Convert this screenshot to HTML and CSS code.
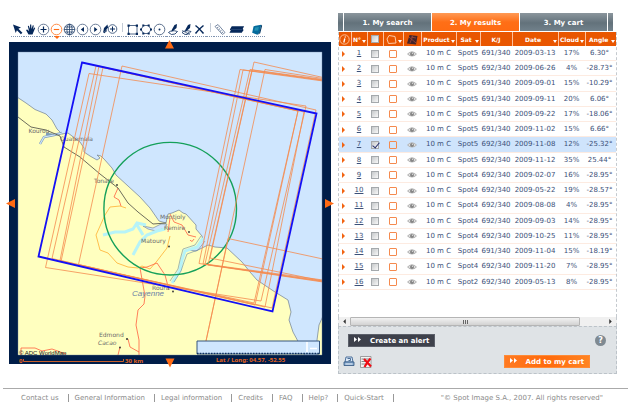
FILE: index.html
```
<!DOCTYPE html>
<html lang="en">
<head>
<meta charset="utf-8">
<title>Spot Image catalogue</title>
<link rel="stylesheet" href="styles.css">
</head>
<body>
<svg class="defs" aria-hidden="true">
  <symbol id="eye" viewBox="0 0 10 6"><path d="M0 3Q5-2.400 10 3Q5 8 0 3Z" fill="#b0b0b0"/><path d="M1.200 3Q5-.8 8.800 3Q5 6.400 1.200 3" fill="#e4e4e4"/><circle cx="5" cy="3" r="2" fill="#858585"/><circle cx="5.500" cy="2.300" r=".7" fill="#ddd"/></symbol>
  <symbol id="pen" viewBox="0 0 13 13"><path d="M10.500 1L8 2 5.500 6.500 5 9l2-1.500L10 5Z" fill="#06285a"/><path d="M2 9.500Q5 6.500 11 8.500Q9 12 5 11.500Z" fill="none" stroke="#06285a" stroke-width=".8"/></symbol>
</svg>
<main class="layout">
  <section class="viewer">
    <div class="toolbar" role="toolbar">
      <button class="tool" aria-label="Select"><svg viewBox="0 0 13 13"><path d="M2 1.500l8 3-2.600 1.300 4 4-1.500 1.500-4-4L4.700 10Z" fill="#06285a"/></svg></button>
      <button class="tool" aria-label="Pan"><svg viewBox="0 0 13 13"><path d="M4.500 11.500L2 7l1.200-.6L5 8 3.800 3l1-.3L6 6l.1-4.500h1.100L7.500 6 8.800 2.300l1 .3L9 6.500l1.300-2 .9.500-1.700 4-1 2.500Z" fill="#06285a"/></svg></button>
      <button class="tool" aria-label="Zoom in"><svg viewBox="0 0 13 13"><circle cx="6.500" cy="6.500" r="5.300" fill="none" stroke="#4a6080" stroke-width=".8"/><path d="M3.500 6.500h6M6.500 3.500v6" stroke="#06285a" stroke-width="1.200"/></svg></button>
      <button class="tool tool-active" aria-label="Zoom out"><svg viewBox="0 0 13 13"><circle cx="6.500" cy="6.500" r="5.300" fill="none" stroke="#ff7f32" stroke-width=".9"/><path d="M3.800 6.500h5.400" stroke="#ff6a13" stroke-width="1.100"/></svg></button>
      <button class="tool" aria-label="World"><svg viewBox="0 0 13 13"><g fill="none" stroke="#25426c" stroke-width=".8"><circle cx="6.500" cy="6.500" r="5.300"/><ellipse cx="6.500" cy="6.500" rx="2.600" ry="5.300"/><path d="M6.500 1v11M1 6.500h11M2 4h9M2 9h9"/></g></svg></button>
      <button class="tool" aria-label="Previous view"><svg viewBox="0 0 13 13"><circle cx="6.500" cy="6.500" r="5.300" fill="none" stroke="#4a6080" stroke-width=".8"/><path d="M8 4v5L4.800 6.500Z" fill="#06285a"/></svg></button>
      <button class="tool" aria-label="Next view"><svg viewBox="0 0 13 13"><circle cx="6.500" cy="6.500" r="5.300" fill="none" stroke="#4a6080" stroke-width=".8"/><path d="M5.200 4v5l3.200-2.500Z" fill="#06285a"/></svg></button>
      <button class="tool tool-wide" aria-label="Draw zoom"><svg viewBox="0 0 16 13"><path d="M1 10l1-5 3.500-3.500L6 4.500 3.500 8Z" fill="#06285a"/><circle cx="10.500" cy="6" r="4.300" fill="none" stroke="#25426c" stroke-width=".8"/><path d="M8 6h5M10.500 3.500v5M5 7.500L2 10" stroke="#06285a"/></svg></button>
      <span class="divider"></span>
      <button class="tool" aria-label="Rectangle"><svg viewBox="0 0 13 13"><path d="M2.500 2.500h8.500v8.500H2.500Z" fill="none" stroke="#25426c" stroke-width=".8"/><path d="M1.500 1.500h2.200v2.200H1.500ZM9.800 1.500H12v2.200H9.800ZM1.500 9.800h2.200V12H1.500ZM9.800 9.800H12V12H9.800Z" fill="#06285a"/></svg></button>
      <button class="tool tool-mid" aria-label="Polygon"><svg viewBox="0 0 14 13"><path d="M4.500 2.500h5l2.500 4-2.500 4h-5L2 6.500Z" fill="none" stroke="#25426c" stroke-width=".8"/><path d="M3.300 1.500h2v2h-2ZM8.700 1.500h2v2h-2ZM3.300 9.500h2v2h-2ZM8.700 9.500h2v2h-2ZM1 5.500h2v2H1ZM11 5.500h2v2h-2Z" fill="#06285a"/></svg></button>
      <button class="tool" aria-label="Circle"><svg viewBox="0 0 13 13"><circle cx="6.500" cy="6.500" r="5.300" fill="none" stroke="#4a6080" stroke-width=".9"/><circle cx="6.500" cy="6.500" r="1" fill="#06285a"/></svg></button>
      <button class="tool tool-mid" aria-label="Draw point"><svg viewBox="0 0 13 13"><use href="#pen"/></svg></button>
      <button class="tool" aria-label="Edit shape"><svg viewBox="0 0 13 13"><use href="#pen"/><path d="M2 7.500l8 4M6 12l3-3" stroke="#25426c" stroke-width=".7"/></svg></button>
      <button class="tool" aria-label="Delete"><svg viewBox="0 0 13 13"><path d="M2.500 2.500Q6 5 10.500 10.500M10.500 2.500Q6 6 2.500 10.500" fill="none" stroke="#06285a" stroke-width="1.500"/></svg></button>
      <span class="divider"></span>
      <button class="tool" aria-label="Measure"><svg viewBox="0 0 13 13"><path d="M1 3.500l3-2 7 8-2.500 2Z" fill="#fff" stroke="#6c7f9c" stroke-width=".9"/><path d="M3 5l1.500-1M4.500 6.700l1.500-1M6 8.400L7.500 7.300M7.500 10l1.500-1" stroke="#25426c" stroke-width=".7"/></svg></button>
      <button class="tool tool-layer" aria-label="Layers"><svg viewBox="0 0 20 13"><path d="M5 3h13l-1.500 3 1 1-2 3H2.500l1.500-2.500L3 6.500Z" fill="#06285a"/><path d="M4 6.500h12" stroke="#40608c" stroke-width=".5"/></svg></button>
      <button class="tool tool-layer" aria-label="Imagery"><svg viewBox="0 0 20 13"><path d="M8 3l8-1.500-1.500 8L12 12l-5.500-2Z" fill="#046a9b"/><path d="M16 1.500l1 1-2 8-2.800 1.500 2-2.500Z" fill="#083a65"/><path d="M9.500 4.500l4-.7-.7 3.800-4 .3Z" fill="#2290b4"/></svg></button>
    </div>
    <svg class="map" viewBox="9 42 322 322" role="img" aria-label="Coverage map">
      <clipPath id="frame"><path d="M18 52h304v303H18Z"/></clipPath>
      <path d="M9 42h322v322H9Z" fill="#001d48"/>
      <g clip-path="url(#frame)">
        <path d="M18 52h304v303H18Z" fill="#cfe6fe"/>
        <g fill="#ffffbf" stroke="#7c8c9c" stroke-width=".8">
          <path d="M17 97L26 103 35 109.500 46 114 52 120 57 129 62 134 68 133 72 136 80 142 84 148 84 152 90 156 97 160 100 158 97 155 101 156 104 159 112 168 116 175 128 186 140 197 150 208 159 221 166 223 168 214 172 213 179 210 183 213 186 214 196 225 196 229 202 236 203 240 197 247 187 250 196 251 208 245 215 247 227 248 242 262 250 272 257 280 275 292 288 300 291 312 289 320 293 332 300 345 305 356H17Z"/>
          <path d="M323 316L319 325 317 340 317 356H323Z"/>
        </g>
        <path d="M40 144l4-7 10-2 8-2M54 135l-8-1" fill="none" stroke="#7c9cb8" stroke-width="2.400"/>
        <path d="M40 144l4-7 10-2 8-2" fill="none" stroke="#cfe6fe" stroke-width="1.200"/>
        <path d="M143 226l10 2 8-4 6 0-2 4-9 3-8-2Z" fill="#cfe6fe" stroke="#7c8c9c" stroke-width=".7"/>
        <g fill="none" stroke="#b6f3f8" stroke-width="3">
          <path d="M103 235l12-3 10 0 8-3 4-6 9 2M133 255l7-13 7-7 10-4 8-2M137 225l6 10"/>
          <path d="M203 238l-6 9-12 4-3 9-2 10-8 13"/>
        </g>
        <path d="M205 241l-7 9-11 4-3 8-3 9-7 11M201 236l-6 9-12 4-3 11-2 9-8 12" fill="none" stroke="#6789a3" stroke-width=".6"/>
        <path d="M126 208l-6-2-10 1-5 8-9 20 4 15 8 3 9 10 11 4 10 1 4-2 8 3 7-8 10-13 3-12" fill="none" stroke="#ffc04d"/>
        <g fill="none" stroke="#ff6040" stroke-width=".8">
          <path d="M118 188l-4 9 5 3 2 6M140 268l3 17 2 11-1 8-6 6-2 15 3 15v15M128 339l2 8 9 5M120 347l-2 8M21 355v-7h14l7 3 10-2 14 5M157 263l8 12 4 15M157 263l-10 4-7 1M170 214l4 8 8 3 6 10 8 2"/>
          <path d="M170 218l-2 14M190 240q2 3 4-1"/>
        </g>
        <path d="M18 117l13 10 15 3 14 6 4 11 16 10 20 17 18 14 10 15 10 9 15 12 13-1" fill="none" stroke="#5c5c50" stroke-width=".9"/>
        <g fill="#333"><circle cx="117" cy="185" r=".9"/><circle cx="189" cy="232" r=".9"/><circle cx="169" cy="246.500" r=".9"/><circle cx="173" cy="291.500" r=".9"/><circle cx="127" cy="339" r="1"/><circle cx="120" cy="347.500" r=".9"/></g>
        <g class="place">
          <text x="28.500" y="132.500">Kourou</text><text x="60" y="141">Guatemala</text><text x="94" y="183">Tonate</text><text x="160" y="219">Montjoly</text><text x="164" y="230">Remire</text><text x="141" y="243">Matoury</text><text x="152" y="289.500">Roura</text><text x="99" y="337">Edmond</text><text class="slanted" x="98" y="345">Cacao</text>
        </g>
        <text class="city" x="132" y="296">Cayenne</text>
        <text class="credit" x="19" y="355">© ADC WorldMap</text>
        <circle cx="170.200" cy="208.700" r="66.300" fill="none" stroke="#15a05a" stroke-width="1.400"/>
        <g fill="none" stroke="#f58a4e" stroke-width=".8">
          <path d="M89 73.500L306 106 261 301 45.500 267.500Z"/>
          <path d="M96 66L298 111 255 305 52 258.500Z"/>
          <path d="M99 66L304 112 265 307 60 260.500Z"/>
          <path d="M103 67.500L298 111 254 303 61 261.500Z"/>
          <path d="M122 66L316 110 272 308 78.500 264.500Z"/>
          <path d="M323 80L240 69.500 199 263.500 323 281"/>
          <path d="M323 81L243 70 203 264 323 281.500"/>
          <path d="M323 79.500L250 69.500 205 264 323 280"/>
          <path d="M323 80.500L252 70 208 265 323 282"/>
          <path d="M323 77.500L254 62 210 258 323 281"/>
          <path d="M323 78.500L265 69.500 206 341"/>
          <path d="M323 259L228 238.500 206 341"/>
        </g>
        <path d="M82 62.500L316.500 113.500 272.500 311.500 38.500 256.500Z" fill="none" stroke="#1410f5" stroke-width="1.800"/>
        <path d="M197 341h122.500v13H197Z" fill="#cfe6fe" stroke="#36557c"/>
        <path d="M197 353.500h122" stroke="#0c2f5e" stroke-width="1.600" stroke-dasharray="1.500 1.300"/>
        <path d="M307 342v10M310 348.500h7" stroke="#fff" stroke-width="1.600"/>
      </g>
      <path d="M18 52h304v303H18Z" fill="none" stroke="#6f87a5" stroke-width=".4"/>
      <path d="M23.500 359v2.500H123.500V359" fill="none" stroke="#c9602b"/>
      <g class="readout"><text x="19" y="362.500">0</text><text x="125" y="362.500">30 km</text><text x="216" y="362">Lat / Long: 04.57, -52.55</text></g>
      <path d="M169.500 40l4.500 8.500h-9ZM170 367.500l4.500-9h-9ZM6 203.500l9-4.500v9ZM334 203.500l-9-4.500v9Z" fill="#ff6a13"/>
    </svg>
  </section>

  <section class="panel">
    <nav class="tabs">
      <span class="tab-end"></span>
      <a class="tab" href="#search">1. My search</a>
      <a class="tab tab-on" href="#results">2. My results</a>
      <a class="tab" href="#cart">3. My cart</a>
      <span class="tab-end"></span>
    </nav>
    <div class="results">
      <table class="scenes">
        <colgroup><col class="c-go"><col class="c-no"><col class="c-no"><col class="c-shape"><col class="c-eye"><col class="c-product"><col class="c-sat"><col class="c-kj"><col class="c-date"><col class="c-cloud"><col class="c-angle"></colgroup>
        <thead><tr>
          <th><svg class="head-icon" viewBox="0 0 11 11"><circle cx="5.500" cy="5.500" r="4.700" fill="none" stroke="#ffc9a5" stroke-width=".9"/><path d="M6.300 2.500v1M5.800 4.500L4.800 8.500" stroke="#fff" stroke-width="1.300"/></svg></th>
          <th class="sort">N°</th>
          <th><input type="checkbox" aria-label="Select all"></th>
          <th class="sort"><svg class="head-icon" viewBox="0 0 11 11"><path d="M3 1.500l6 1 1 6.500-7.500.5L1 5Z" fill="none" stroke="#ffc9a5"/></svg></th>
          <th><svg class="head-icon" viewBox="0 0 11 11"><path d="M2.500 1L10.500 2 9 10.500 0 9.500Z" fill="#43242b"/><path d="M2 3l7 6M6 1.500L3 9M4 3l5 1" stroke="#a04a3c" stroke-width=".8"/></svg></th>
          <th class="sort">Product</th><th class="sort">Sat</th><th>K/J</th><th class="sort">Date</th><th class="sort">Cloud</th><th class="sort">Angle</th>
        </tr></thead>
        <tbody id="rows"></tbody>
      </table>
    </div>
    <div class="scroller">
      <button class="scroll-step" aria-label="Scroll left"><svg viewBox="0 0 4 4"><path d="M3 0v4L1 2Z" fill="#333"/></svg></button>
      <div class="scroll-thumb"><i></i><i></i><i></i></div>
      <button class="scroll-step scroll-right" aria-label="Scroll right"><svg viewBox="0 0 4 4"><path d="M1 0v4l2-2Z" fill="#333"/></svg></button>
    </div>
    <div class="actions">
      <div class="action-row">
        <button class="cta"><svg viewBox="0 0 8 6"><path d="M0 0l3 2.500L0 5ZM4 0l3 2.500L4 5Z" fill="#fff"/></svg><span>Create an alert</span></button>
        <button class="help" aria-label="Help">?</button>
      </div>
      <div class="action-row action-low">
        <button class="mini" aria-label="Print"><svg viewBox="0 0 12 12"><path d="M3 1h6l1 5H2Z" fill="#dbe8f7" stroke="#3c6391" stroke-width=".9"/><path d="M4.500 2.500h3v2h-2" stroke="#27507f" fill="none" stroke-width=".8"/><path d="M1 6h10v3.500H1Z" fill="#86a9d0" stroke="#31557f" stroke-width=".8"/><path d="M2.500 8h7" stroke="#fff" stroke-width=".8"/></svg></button>
        <button class="mini" aria-label="Clear list"><svg viewBox="0 0 12 12"><path d="M.500.500h10.500v11H.500Z" fill="#f4f4f4" stroke="#8a8a8a" stroke-width=".8"/><path d="M1.500 3h8M1.500 5.500h8M1.500 8h8" stroke="#777" stroke-width=".9"/><path d="M4 3q3 3 7 7.500M10.500 2.500q-3 3-6 8.500" fill="none" stroke="#f00a12" stroke-width="2.200"/></svg></button>
        <button class="cta cta-cart"><svg viewBox="0 0 8 6"><path d="M0 0l3 2.500L0 5ZM4 0l3 2.500L4 5Z" fill="#fff"/></svg><span>Add to my cart</span></button>
      </div>
    </div>
  </section>
</main>
<footer class="footer">
  <nav class="links"><a href="#contact">Contact us</a><a href="#general">General Information</a><a href="#legal">Legal information</a><a href="#credits">Credits</a><a href="#faq">FAQ</a><a href="#help">Help?</a><a href="#start">Quick-Start</a></nav>
  <span>"© Spot Image S.A., 2007. All rights reserved"</span>
</footer>
<script src="script.js"></script>
</body>
</html>
```
FILE: styles.css
```
* { box-sizing: border-box; }
body {
  margin: 0;
  background: #fff;
  color: #3c5078;
  font: 7px/9px "DejaVu Sans", Verdana, sans-serif;
}
button { border: 0; padding: 0; background: none; font: inherit; color: inherit; }
a { color: inherit; }
svg { display: block; }
.defs { position: absolute; width: 0; height: 0; }

.layout {
  display: grid;
  grid-template-columns: minmax(0, 322fr) minmax(0, 279fr);
  gap: 7px;
  align-items: start;
  padding: 13px 13px 0 9px;
}

.toolbar { display: flex; align-items: flex-start; height: 29px; padding: 8px 0 0 2px; }
.tool { position: relative; flex: none; width: 13px; height: 16px; }
.tool svg { width: 100%; height: 13px; }
.tool::after {
  content: "";
  position: absolute;
  left: 0;
  right: 0;
  bottom: 0;
  border-bottom: 1px dotted #7f93b0;
}
.tool-wide { width: 16px; }
.tool-mid { width: 14px; }
.tool-layer { width: 19px; }
.tool-active::before {
  content: "";
  position: absolute;
  z-index: 1;
  left: 4px;
  top: 15px;
  border: solid transparent;
  border-width: 3px 3px 0;
  border-top-color: #ff6a13;
}
.divider { flex: none; width: 8px; height: 16px; border-bottom: 1px dotted #7f93b0; display: flex; justify-content: center; padding-top: 2px; }
.divider::before { content: ""; width: 1px; height: 9px; background: #c3cbd6; }

.map { width: 100%; height: auto; overflow: visible; }
.place { font-size: 6px; fill: #6c6c6c; }
.slanted { font-style: italic; }
.city { font: italic 8px "Liberation Sans", sans-serif; fill: #6c7fa5; }
.credit { font: 6px "Liberation Sans", sans-serif; fill: #111; }
.readout { font: bold 6px "Noto Sans", sans-serif; fill: #e8651d; }

.tabs { display: flex; gap: 1px; height: 18px; margin-bottom: 1px; padding-right: 4px; }
.tab, .tab-end { background: linear-gradient(#8b969d, #63727b 55%, #71818b); }
.tab { flex: 1; color: #fff; font-weight: bold; line-height: 20px; text-align: center; text-decoration: none; }
.tab-on { background: linear-gradient(#ff9a55, #ff6f17 50%, #ff6b12); }
.tab-end { width: 5px; }

.results { border: dashed #c5cacf; border-width: 0 1px; padding-bottom: 27px; }
.scenes { width: 100%; height: 258px; table-layout: fixed; border-collapse: collapse; }
.c-go { width: 12px; }
.c-no { width: 16px; }
.c-shape { width: 20px; }
.c-eye { width: 18px; }
.c-product { width: 35px; }
.c-sat { width: 24px; }
.c-kj { width: 32px; }
.c-date { width: 46px; }
.c-cloud { width: 27px; }
.c-angle { width: 31px; }
.scenes th, .scenes td { padding: 0; text-align: center; white-space: nowrap; vertical-align: middle; }
.scenes thead tr { height: 14px; }
.scenes th { position: relative; background: #e95600; color: #fff; font-size: 6px; border-right: 1px solid #ffc09a; }
.scenes th:last-child { border-right: 0; }
.scenes td { padding-top: 1px; border-bottom: 1px solid #fdebe1; }
.scenes td:last-child { padding-right: 2px; }
.scenes .picked td { background: #cfe4fc; }
.scenes th.sort { padding-right: 4px; }
.sort::after {
  content: "";
  position: absolute;
  right: 1px;
  bottom: 3px;
  border: solid transparent;
  border-width: 3px 2px 0;
  border-top-color: #fff;
}
.head-icon { display: block; width: 11px; height: 11px; margin: 0 auto; }
.scenes input {
  appearance: none;
  display: block;
  width: 8px;
  height: 8px;
  margin: 0 auto;
  border: 1px solid #a5a9ac;
  background: linear-gradient(135deg, #c6c9cb, #f8f8f8);
}
.scenes input:checked::before {
  content: "";
  display: block;
  width: 3px;
  height: 6px;
  margin: -1px 0 0 2px;
  border: solid #25306e;
  border-width: 0 1px 1px 0;
  transform: rotate(40deg);
}
.go { display: block; width: 0; margin-left: 3px; border: solid transparent; border-width: 3px 0 3px 3px; border-left-color: #f26311; }
.outline { display: block; width: 8px; height: 8px; margin: 0 auto; border: 1px solid #f58a4e; border-radius: 1px; }
.eye { width: 10px; height: 6px; margin: 0 auto; }

.scroller { display: flex; height: 9px; background: #f0f0f0; border-left: 1px dashed #c5cacf; border-right: 1px dashed #c5cacf; }
.scroll-step { flex: none; width: 11px; }
.scroll-step svg { width: 5px; height: 5px; margin: 0 auto; }
.scroll-thumb { flex: 83; display: flex; justify-content: center; align-items: center; gap: 1px; border: 1px solid #b5b5b5; border-radius: 1px; background: linear-gradient(#f2f2f2, #d2d2d2); }
.scroll-thumb i { width: 1px; height: 4px; background: #666; }
.scroll-right { margin-left: 9%; }

.actions { border: 1px dashed #bcc3c9; background: #dfe3e6; padding: 7px 10px 5px 4px; }
.action-row { display: flex; align-items: center; height: 13px; }
.action-row + .action-row { margin-top: 8px; }
.cta { display: flex; align-items: center; gap: 8px; height: 13px; padding: 0 5px; margin-left: 5px; border: 1px solid #5b5f69; background: #3e414b; color: #fff; font-weight: bold; white-space: nowrap; }
.cta svg { width: 8px; height: 6px; margin-top: -2px; }
.cta span { line-height: 13px; padding-top: 2px; }
.cta-cart { margin: 0 16px 0 auto; border-color: #ff8a35; background: linear-gradient(90deg, #ff7a22, #ff6a0c 50%, #ff8422); }
.help { width: 11px; height: 11px; margin-left: auto; border-radius: 50%; background: #7f8a92; color: #fff; font-size: 8px; font-weight: bold; line-height: 11px; }
.mini { width: 12px; height: 12px; margin-right: 5px; }

.footer { display: flex; justify-content: space-between; margin: 14px 2px 0 3px; padding: 5px 25px 0 18px; border-top: 1px solid #aaa; color: #8b8b8b; white-space: nowrap; }
.links { display: flex; }
.links a { text-decoration: none; padding-right: 9px; margin-right: 6px; border-right: 1px solid #999; line-height: 8px; height: 8px; }
```
FILE: script.js
```
const scenes = [
  ["5", "691/340", "2009-03-13", "17%", "6.30°"],
  ["5", "692/340", "2009-06-26", "4%", "-28.73°"],
  ["5", "691/340", "2009-09-01", "15%", "-10.29°"],
  ["5", "691/340", "2009-09-11", "20%", "6.06°"],
  ["5", "691/340", "2009-09-22", "17%", "-18.06°"],
  ["5", "691/340", "2009-11-02", "15%", "6.66°"],
  ["5", "692/340", "2009-11-08", "12%", "-25.32°"],
  ["5", "692/340", "2009-11-12", "35%", "25.44°"],
  ["4", "692/340", "2009-02-07", "16%", "-28.95°"],
  ["4", "692/340", "2009-05-22", "19%", "-28.57°"],
  ["4", "692/340", "2009-08-08", "4%", "-28.95°"],
  ["4", "692/340", "2009-09-03", "14%", "-28.95°"],
  ["4", "692/340", "2009-10-25", "11%", "-28.95°"],
  ["4", "691/340", "2009-11-04", "15%", "-18.19°"],
  ["4", "692/340", "2009-11-20", "7%", "-28.95°"],
  ["2", "692/340", "2009-05-13", "8%", "-28.95°"]
];
const picked = 7;
document.getElementById("rows").innerHTML = scenes.map(([sat, kj, date, cloud, angle], i) => {
  const n = i + 1;
  const on = n === picked;
  return `<tr class="${on ? "picked" : ""}">
    <td><span class="go"></span></td>
    <td><a href="#scene-${n}">${n}</a></td>
    <td><input type="checkbox" aria-label="Select scene ${n}"${on ? " checked" : ""}></td>
    <td><span class="outline"></span></td>
    <td><svg class="eye"><use href="#eye"/></svg></td>
    <td>10 m C</td><td>Spot${sat}</td><td>${kj}</td><td>${date}</td><td>${cloud}</td><td>${angle}</td>
  </tr>`;
}).join("");
```
